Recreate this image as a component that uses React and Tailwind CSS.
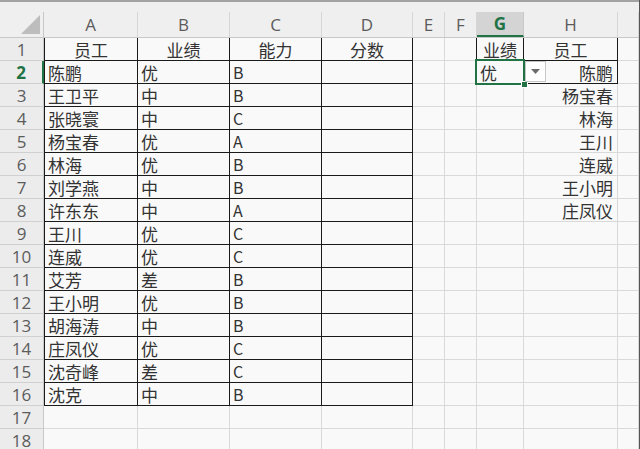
import React from "react";

// column widths include the right gridline of each column
const colTemplate = "grid-cols-[44px_94px_92px_92px_91px_32px_32px_47px_94px_1fr]";
const colLetters = ["", "A", "B", "C", "D", "E", "F", "G", "H", ""];

const rows = [
  ["员工", "业绩", "能力", "分数"],
  ["陈鹏", "优", "B", ""],
  ["王卫平", "中", "B", ""],
  ["张晓寰", "中", "C", ""],
  ["杨宝春", "优", "A", ""],
  ["林海", "优", "B", ""],
  ["刘学燕", "中", "B", ""],
  ["许东东", "中", "A", ""],
  ["王川", "优", "C", ""],
  ["连威", "优", "C", ""],
  ["艾芳", "差", "B", ""],
  ["王小明", "优", "B", ""],
  ["胡海涛", "中", "B", ""],
  ["庄凤仪", "优", "C", ""],
  ["沈奇峰", "差", "C", ""],
  ["沈克", "中", "B", ""],
  ["", "", "", ""],
  ["", "", "", ""],
];

const lookup = {
  1: ["业绩", "员工"],
  2: ["优", "陈鹏"],
  3: ["", "杨宝春"],
  4: ["", "林海"],
  5: ["", "王川"],
  6: ["", "连威"],
  7: ["", "王小明"],
  8: ["", "庄凤仪"],
};

const Cell = ({ children, right, bottom, left, align = "left" }) => (
  <div
    className={`h-[23px] flex items-center overflow-hidden whitespace-nowrap border-r border-b ${right ? "border-r-[#1a1a1a]" : "border-r-[#d9d9d9]"} ${bottom ? "border-b-[#1a1a1a]" : "border-b-[#d9d9d9]"} ${left ? "border-l border-l-[#1a1a1a]" : ""} ${align === "center" ? "justify-center" : align === "right" ? "justify-end pr-[4px]" : "pl-[3px]"}`}
  >
    {children}
  </div>
);

const App = () => {
  return (
    <div className="relative w-[640px] h-[449px] overflow-hidden bg-[#f9f9f9] border-r border-r-[#555] text-[17px] text-[#333] font-['Noto_Sans_CJK_SC',sans-serif] leading-none">
      {/* top strip */}
      <div className="h-[12px] bg-[#efefef] border-t-2 border-t-[#a3a3a3]" />

      {/* column headers */}
      <div className={`grid ${colTemplate} h-[26px] bg-[#efefef] border-b border-b-[#c8c8c8] font-['Open_Sans',sans-serif] text-[17px] text-[#5c5c5c]`}>
        {colLetters.map((l, i) =>
          i === 0 ? (
            <div key={i} className="relative border-r border-r-[#c8c8c8]">
              <svg className="absolute left-0 top-0" width="44" height="25">
                <polygon points="40,3 40,22 21,22" fill="#bdbdbd" />
              </svg>
            </div>
          ) : l === "G" ? (
            <div key={i} className="flex items-center justify-center bg-[#d4d4d4] border-b-2 border-b-[#217346] border-r border-r-[#c8c8c8] font-bold text-[#217346]">
              {l}
            </div>
          ) : (
            <div key={i} className="flex items-center justify-center border-r border-r-[#d6d6d6]">
              {l}
            </div>
          )
        )}
      </div>

      {/* body */}
      {rows.map((r, idx) => {
        const n = idx + 1;
        const inTable = n <= 16;
        const lk = lookup[n] || ["", ""];
        const isSel = n === 2;
        return (
          <div key={n} className={`grid ${colTemplate}`}>
            <div
              className={`h-[23px] flex items-center justify-center bg-[#ececec] border-b border-b-[#d0d0d0] font-['Open_Sans',sans-serif] ${isSel ? "border-r-2 border-r-[#217346] text-[#217346] font-bold" : "border-r border-r-[#c8c8c8] text-[#5c5c5c]"}`}
            >
              {n}
            </div>
            <Cell right={inTable} bottom={inTable} left={inTable} align={n === 1 ? "center" : "left"}>
              {r[0]}
            </Cell>
            <Cell right={inTable} bottom={inTable} align={n === 1 ? "center" : "left"}>
              {r[1]}
            </Cell>
            <Cell right={inTable} bottom={inTable} align={n === 1 ? "center" : "left"}>
              <span className={n === 1 ? "" : "text-[16px]"}>{r[2]}</span>
            </Cell>
            <Cell right={inTable} bottom={inTable} align="center">
              {r[3]}
            </Cell>
            <Cell />
            <Cell right={n <= 2} />
            <Cell right={n <= 2} bottom={n <= 2} align={n === 1 ? "center" : "left"}>
              {lk[0]}
            </Cell>
            <Cell right={n <= 2} bottom={n <= 2} align={n === 1 ? "center" : "right"}>
              {lk[1]}
            </Cell>
            <Cell />
          </div>
        );
      })}

      {/* active cell G2 */}
      <div className="absolute left-[475px] top-[59px] w-[50px] h-[26px] border-2 border-[#217346]" />
      <div className="absolute left-[521px] top-[81px] w-[7px] h-[7px] bg-[#217346] border border-white" />

      {/* data validation dropdown */}
      <div className="absolute left-[525px] top-[61px] w-[21px] h-[21px] bg-white border border-[#c6c6c6] flex items-center justify-center">
        <svg width="9" height="5" viewBox="0 0 9 5">
          <polygon points="0,0 9,0 4.5,5" fill="#6b6b6b" />
        </svg>
      </div>
    </div>
  );
};

export default App;
